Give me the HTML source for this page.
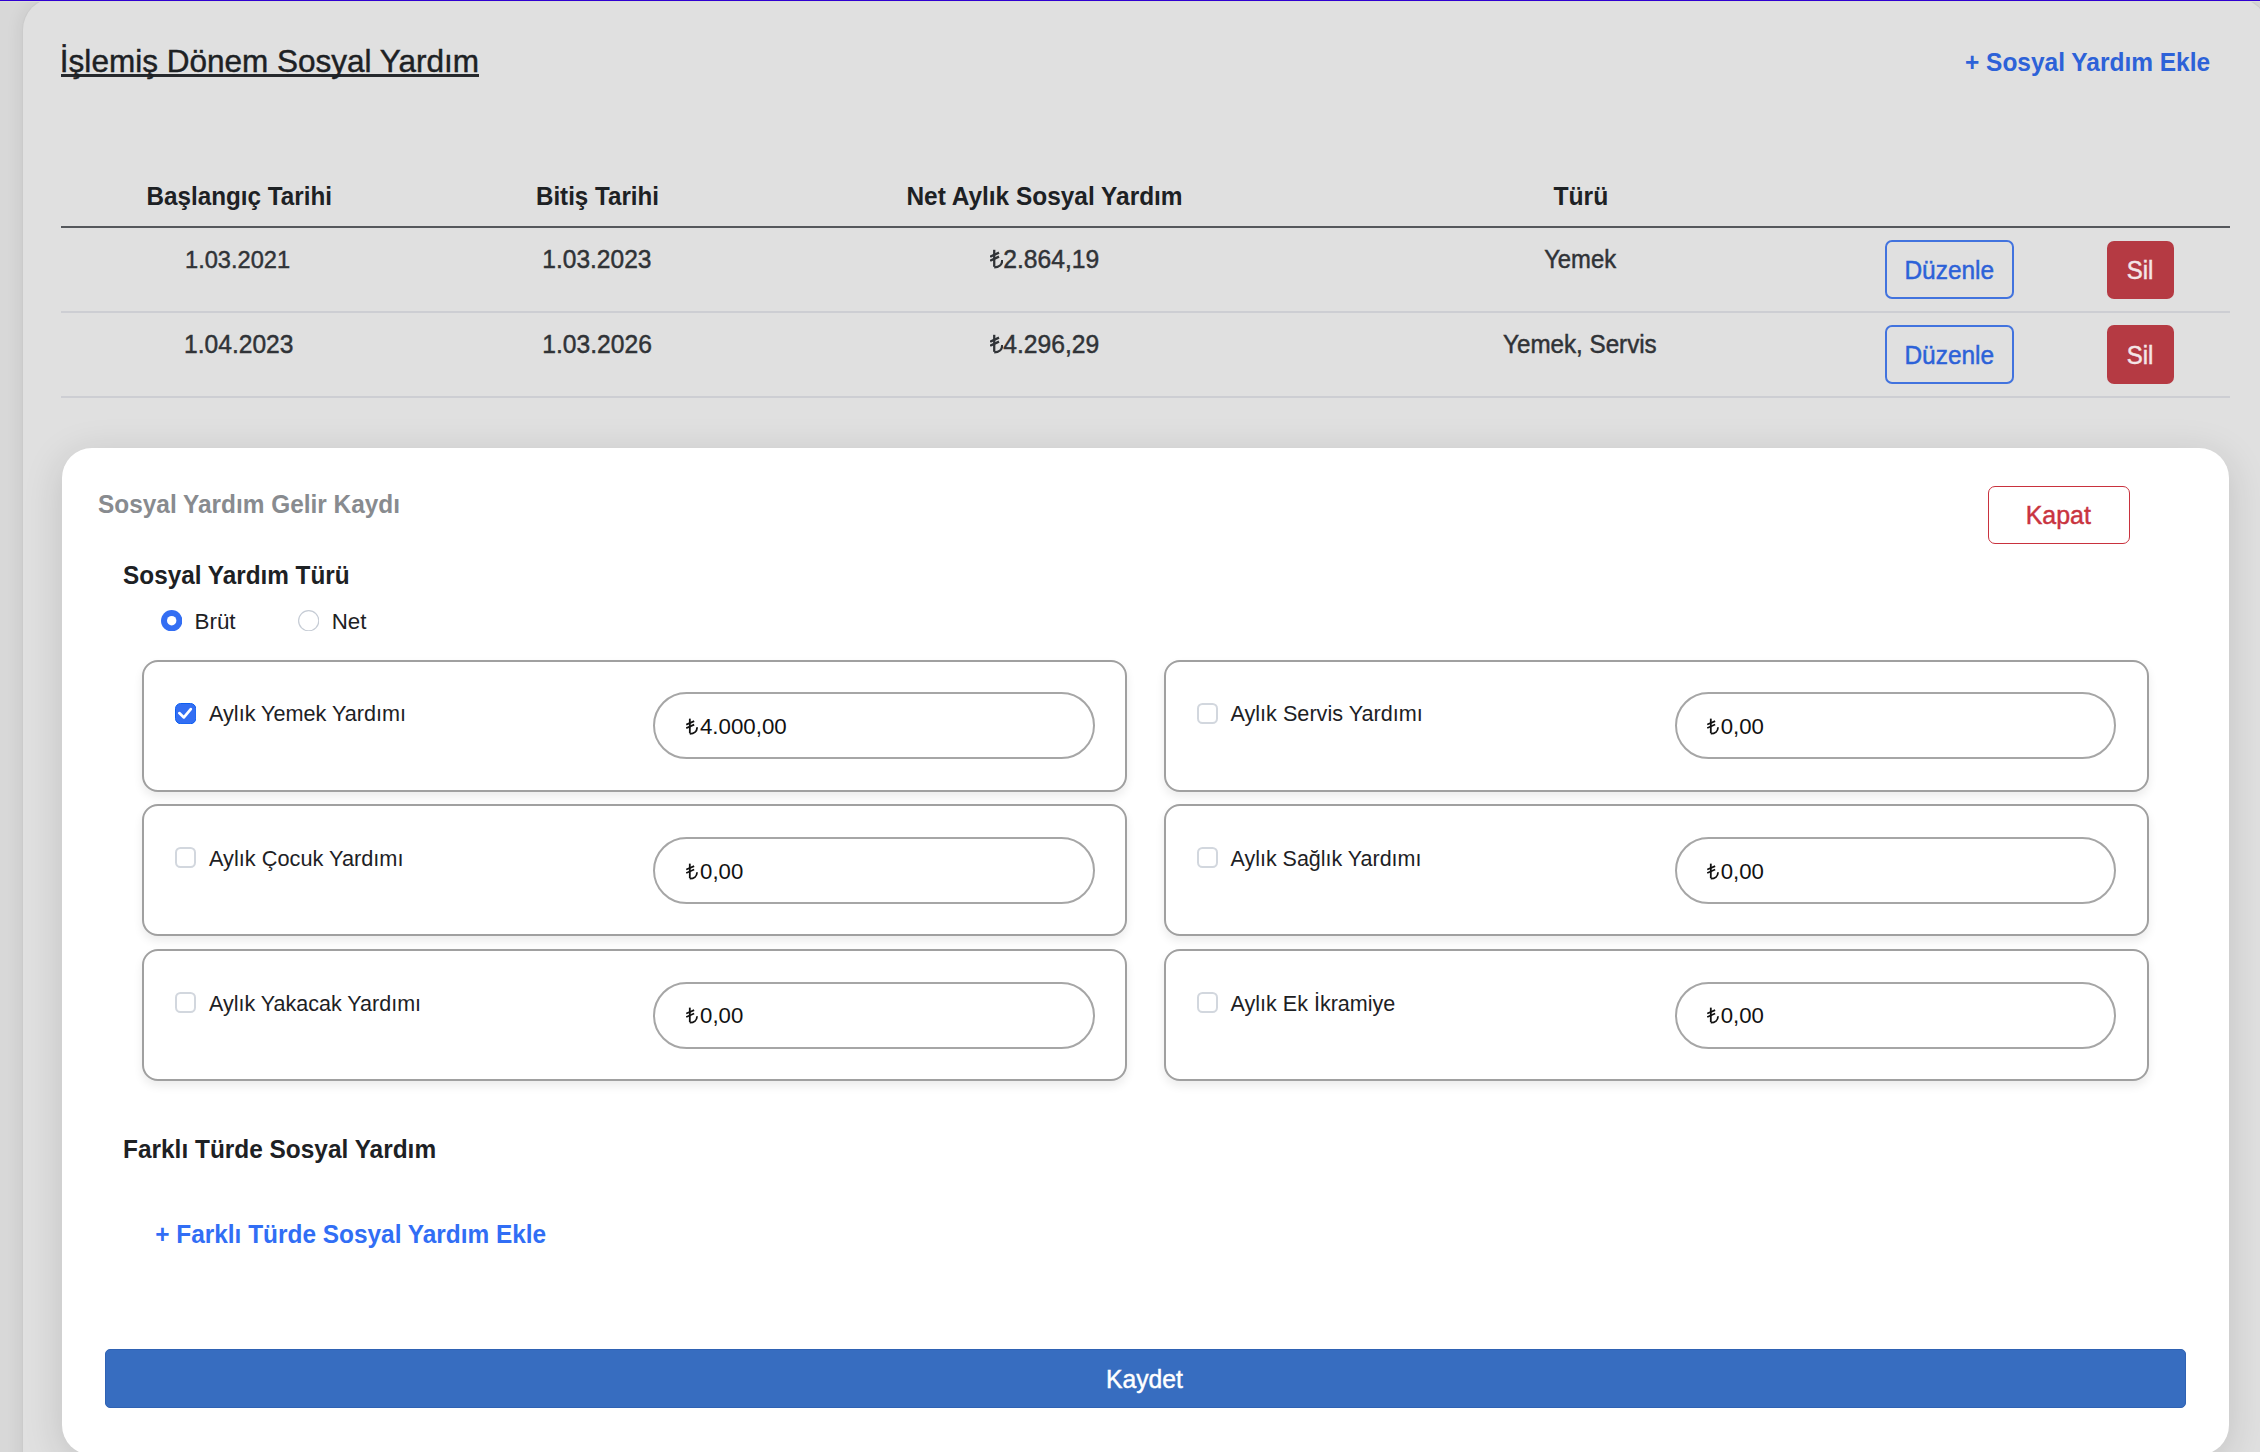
<!DOCTYPE html>
<html lang="tr">
<head>
<meta charset="utf-8">
<title>Sosyal Yardım</title>
<style>
html,body{margin:0;padding:0;}
body{width:2260px;height:1452px;overflow:hidden;position:relative;background:#d8d8d8;font-family:"Liberation Sans",sans-serif;}
.t{position:absolute;white-space:nowrap;line-height:1;}
#topline{position:absolute;left:0;top:0;width:2260px;height:1px;background:#3000d2;}
#topline2{position:absolute;left:0;top:1px;width:2260px;height:1px;background:#dcdfd6;}
#card{position:absolute;left:23px;top:-2px;width:2245px;height:1600px;background:#e0e0e0;border-radius:32px;box-shadow:0 0 0 1px #cbcbcb,-3px 0 16px rgba(0,0,0,0.07);}
.rowline{position:absolute;left:61px;width:2169px;height:2px;background:#cdced3;}
.btn-e{position:absolute;box-sizing:border-box;border:2px solid #4273de;border-radius:7px;width:129px;height:59px;}
.btn-s{position:absolute;box-sizing:border-box;background:#b53a43;border-radius:7px;width:67px;height:58.5px;}
#modal{position:absolute;left:62px;top:448px;width:2167px;height:1007px;background:#fff;border-radius:30px;box-shadow:0 8px 40px rgba(0,0,0,0.14);}
.box{position:absolute;box-sizing:border-box;border:2px solid #a0a0a0;border-radius:16px;background:#fff;width:984.6px;height:131.8px;box-shadow:0 5px 10px rgba(0,0,0,0.08);}
.inp{position:absolute;box-sizing:border-box;border:2px solid #a6a6a6;border-radius:34px;width:441.5px;height:67px;background:#fff;}
.cb{position:absolute;box-sizing:border-box;width:21px;height:21px;border:2px solid #d2d7de;border-radius:5.5px;background:#fff;}
#kapatbtn{position:absolute;box-sizing:border-box;left:1988px;top:486px;width:142px;height:58px;border:1.5px solid #c9323e;border-radius:7px;}
#kaydetbtn{position:absolute;box-sizing:border-box;left:105px;top:1349.4px;width:2080.7px;height:58.2px;background:#376dc0;border:1px solid #2f62b3;border-radius:5px;}

</style>
</head>
<body>
<div id="card"></div>
<div id="topline"></div>
<div id="topline2"></div>
<div id="uline" style="position:absolute;left:60.6px;top:74.3px;width:418.7px;height:2.3px;background:#26292d;"></div>
<div class="rowline" style="top:226.4px;background:#55585c;"></div>
<div class="rowline" style="top:311px;"></div>
<div class="rowline" style="top:396px;"></div>
<div class="btn-e" style="left:1885.3px;top:240.3px;"></div>
<div class="btn-s" style="left:2107.3px;top:240.5px;"></div>
<div class="btn-e" style="left:1885.3px;top:324.9px;"></div>
<div class="btn-s" style="left:2107.3px;top:325.1px;"></div>
<div id="modal"></div>
<div id="kapatbtn"></div>
<svg style="position:absolute;left:160.8px;top:610.1px" width="21.4" height="21.4" viewBox="0 0 21.4 21.4"><circle cx="10.7" cy="10.7" r="10.7" fill="#336ef3"/><circle cx="10.7" cy="10.7" r="4.7" fill="#fff"/></svg>
<svg style="position:absolute;left:297.8px;top:610.1px" width="21.4" height="21.4" viewBox="0 0 21.4 21.4"><circle cx="10.7" cy="10.7" r="10.1" fill="#fff" stroke="#c6ccd5" stroke-width="1.2"/></svg>
<div class="box" style="left:142.2px;top:660px;"></div>
<div class="inp" style="left:653px;top:692.3px;"></div>
<svg style="position:absolute;left:174.7px;top:702.8px" width="21.3" height="21.2" viewBox="0 0 21.3 21.2"><rect x="0.5" y="0.5" width="20.3" height="20.2" rx="5.2" fill="#336ef3" stroke="#0b5df0" stroke-width="1"/><path d="M4.3 10.1 L8.9 14.4 L15.8 6.1" fill="none" stroke="#fff" stroke-width="2.7" stroke-linecap="round" stroke-linejoin="round"/></svg>
<div class="box" style="left:1164.2px;top:660px;"></div>
<div class="inp" style="left:1674.5px;top:692.3px;"></div>
<div class="cb" style="left:1196.6px;top:702.8px;"></div>
<div class="box" style="left:142.2px;top:804.4px;"></div>
<div class="inp" style="left:653px;top:836.7px;"></div>
<div class="cb" style="left:174.7px;top:847.2px;"></div>
<div class="box" style="left:1164.2px;top:804.4px;"></div>
<div class="inp" style="left:1674.5px;top:836.7px;"></div>
<div class="cb" style="left:1196.6px;top:847.2px;"></div>
<div class="box" style="left:142.2px;top:949.3px;"></div>
<div class="inp" style="left:653px;top:981.6px;"></div>
<div class="cb" style="left:174.7px;top:992.1px;"></div>
<div class="box" style="left:1164.2px;top:949.3px;"></div>
<div class="inp" style="left:1674.5px;top:981.6px;"></div>
<div class="cb" style="left:1196.6px;top:992.1px;"></div>
<div id="kaydetbtn"></div>

<div class="t" id="title" style="left:59.86px;top:46.26px;font-size:31.526px;font-weight:normal;color:#1d2124;-webkit-text-stroke:0.45px #1d2124;">İşlemiş Dönem Sosyal Yardım</div>
<div class="t" id="addlink" style="left:1965.00px;top:51.28px;font-size:24.480px;font-weight:bold;color:#2d62d8;transform:scaleY(1.05);transform-origin:0 20.74px;">+ Sosyal Yardım Ekle</div>
<div class="t" id="h1" style="left:146.50px;top:185.39px;font-size:24.269px;font-weight:bold;color:#1d2124;transform:scaleY(1.05);transform-origin:0 20.63px;">Başlangıç Tarihi</div>
<div class="t" id="h2" style="left:535.94px;top:185.44px;font-size:24.162px;font-weight:bold;color:#1d2124;transform:scaleY(1.05);transform-origin:0 20.58px;">Bitiş Tarihi</div>
<div class="t" id="h3" style="left:906.41px;top:185.29px;font-size:24.455px;font-weight:bold;color:#1d2124;transform:scaleY(1.05);transform-origin:0 20.73px;">Net Aylık Sosyal Yardım</div>
<div class="t" id="h4" style="left:1553.46px;top:185.17px;font-size:24.699px;font-weight:bold;color:#1d2124;transform:scaleY(1.05);transform-origin:0 20.85px;">Türü</div>
<div class="t" id="r1c1" style="left:185.05px;top:249.21px;font-size:23.620px;font-weight:normal;color:#303337;-webkit-text-stroke:0.45px #303337;transform:scaleY(1.05);transform-origin:0 19.81px;">1.03.2021</div>
<div class="t" id="r1c2" style="left:542.31px;top:248.25px;font-size:24.548px;font-weight:normal;color:#303337;-webkit-text-stroke:0.45px #303337;transform:scaleY(1.05);transform-origin:0 20.77px;">1.03.2023</div>
<div class="t" id="r1c3" style="left:990.11px;top:248.19px;font-size:24.657px;font-weight:normal;color:#303337;-webkit-text-stroke:0.45px #303337;transform:scaleY(1.05);transform-origin:0 20.83px;"><svg class="lira" viewBox="0 -15.6 11.2 16.4" style="width:0.5333em;height:0.7810em;vertical-align:-0.0381em;margin-right:0.000em" ><g fill="none" stroke="#303337" stroke-width="1.95" stroke-linecap="butt"><path d="M3.6 -15 L3.6 -1.2"/><path d="M3.6 -0.75 C7.6 -0.75 10.4 -3.0 10.45 -6.8"/><path d="M0.2 -9.4 L7.7 -12.7"/><path d="M0.2 -6.1 L7.7 -9.4"/></g></svg>2.864,19</div>
<div class="t" id="r1c4" style="left:1544.18px;top:247.61px;font-size:23.823px;font-weight:normal;color:#303337;-webkit-text-stroke:0.45px #303337;transform:scaleY(1.05);transform-origin:0 20.41px;">Yemek</div>
<div class="t" id="r2c1" style="left:184.07px;top:333.22px;font-size:24.593px;font-weight:normal;color:#303337;-webkit-text-stroke:0.45px #303337;transform:scaleY(1.05);transform-origin:0 20.80px;">1.04.2023</div>
<div class="t" id="r2c2" style="left:542.31px;top:333.20px;font-size:24.638px;font-weight:normal;color:#303337;-webkit-text-stroke:0.45px #303337;transform:scaleY(1.05);transform-origin:0 20.82px;">1.03.2026</div>
<div class="t" id="r2c3" style="left:990.11px;top:333.19px;font-size:24.657px;font-weight:normal;color:#303337;-webkit-text-stroke:0.45px #303337;transform:scaleY(1.05);transform-origin:0 20.83px;"><svg class="lira" viewBox="0 -15.6 11.2 16.4" style="width:0.5333em;height:0.7810em;vertical-align:-0.0381em;margin-right:0.000em" ><g fill="none" stroke="#303337" stroke-width="1.95" stroke-linecap="butt"><path d="M3.6 -15 L3.6 -1.2"/><path d="M3.6 -0.75 C7.6 -0.75 10.4 -3.0 10.45 -6.8"/><path d="M0.2 -9.4 L7.7 -12.7"/><path d="M0.2 -6.1 L7.7 -9.4"/></g></svg>4.296,29</div>
<div class="t" id="r2c4" style="left:1503.02px;top:333.42px;font-size:24.209px;font-weight:normal;color:#303337;-webkit-text-stroke:0.45px #303337;transform:scaleY(1.05);transform-origin:0 20.60px;">Yemek, Servis</div>
<div class="t" id="ed1" style="left:1904.43px;top:259.29px;font-size:24.458px;font-weight:normal;color:#2d62d8;-webkit-text-stroke:0.45px #2d62d8;transform:scaleY(1.05);transform-origin:0 20.73px;">Düzenle</div>
<div class="t" id="ed2" style="left:1904.43px;top:344.29px;font-size:24.458px;font-weight:normal;color:#2d62d8;-webkit-text-stroke:0.45px #2d62d8;transform:scaleY(1.05);transform-origin:0 20.73px;">Düzenle</div>
<div class="t" id="sil1" style="left:2126.72px;top:258.53px;font-size:23.970px;font-weight:normal;color:#f4e6e7;-webkit-text-stroke:0.45px #f4e6e7;transform:scaleY(1.05);transform-origin:0 20.49px;">Sil</div>
<div class="t" id="sil2" style="left:2126.72px;top:343.53px;font-size:23.970px;font-weight:normal;color:#f4e6e7;-webkit-text-stroke:0.45px #f4e6e7;transform:scaleY(1.05);transform-origin:0 20.49px;">Sil</div>
<div class="t" id="mtitle" style="left:98.00px;top:493.31px;font-size:24.419px;font-weight:bold;color:#888b8f;transform:scaleY(1.05);transform-origin:0 20.71px;">Sosyal Yardım Gelir Kaydı</div>
<div class="t" id="kapat" style="left:2025.66px;top:502.54px;font-size:24.957px;font-weight:normal;color:#c9343f;-webkit-text-stroke:0.45px #c9343f;transform:scaleY(1.05);transform-origin:0 21.48px;">Kapat</div>
<div class="t" id="sec1" style="left:123.09px;top:564.36px;font-size:24.329px;font-weight:bold;color:#1d2124;transform:scaleY(1.05);transform-origin:0 20.66px;">Sosyal Yardım Türü</div>
<div class="t" id="brut" style="left:194.51px;top:611.31px;font-size:22.413px;font-weight:normal;color:#1d2124;">Brüt</div>
<div class="t" id="net" style="left:331.64px;top:611.36px;font-size:22.317px;font-weight:normal;color:#1d2124;">Net</div>
<div class="t" id="lab0" style="left:209.00px;top:702.70px;font-size:21.642px;font-weight:normal;color:#1d2124;">Aylık Yemek Yardımı</div>
<div class="t" id="val0" style="left:686.00px;top:716.36px;font-size:22.329px;font-weight:normal;color:#111;"><svg class="lira" viewBox="0 -15.6 11.2 16.4" style="width:0.5333em;height:0.7810em;vertical-align:-0.0381em;margin-right:0.090em" ><g fill="none" stroke="#111" stroke-width="1.7" stroke-linecap="butt"><path d="M3.6 -15 L3.6 -1.2"/><path d="M3.6 -0.75 C7.6 -0.75 10.4 -3.0 10.45 -6.8"/><path d="M0.2 -9.4 L7.7 -12.7"/><path d="M0.2 -6.1 L7.7 -9.4"/></g></svg>4.000,00</div>
<div class="t" id="lab1" style="left:1230.46px;top:702.70px;font-size:21.637px;font-weight:normal;color:#1d2124;">Aylık Servis Yardımı</div>
<div class="t" id="val1" style="left:1706.95px;top:716.43px;font-size:22.180px;font-weight:normal;color:#111;"><svg class="lira" viewBox="0 -15.6 11.2 16.4" style="width:0.5333em;height:0.7810em;vertical-align:-0.0381em;margin-right:0.090em" ><g fill="none" stroke="#111" stroke-width="1.7" stroke-linecap="butt"><path d="M3.6 -15 L3.6 -1.2"/><path d="M3.6 -0.75 C7.6 -0.75 10.4 -3.0 10.45 -6.8"/><path d="M0.2 -9.4 L7.7 -12.7"/><path d="M0.2 -6.1 L7.7 -9.4"/></g></svg>0,00</div>
<div class="t" id="lab2" style="left:209.00px;top:847.65px;font-size:21.746px;font-weight:normal;color:#1d2124;">Aylık Çocuk Yardımı</div>
<div class="t" id="val2" style="left:686.26px;top:861.43px;font-size:22.188px;font-weight:normal;color:#111;"><svg class="lira" viewBox="0 -15.6 11.2 16.4" style="width:0.5333em;height:0.7810em;vertical-align:-0.0381em;margin-right:0.090em" ><g fill="none" stroke="#111" stroke-width="1.7" stroke-linecap="butt"><path d="M3.6 -15 L3.6 -1.2"/><path d="M3.6 -0.75 C7.6 -0.75 10.4 -3.0 10.45 -6.8"/><path d="M0.2 -9.4 L7.7 -12.7"/><path d="M0.2 -6.1 L7.7 -9.4"/></g></svg>0,00</div>
<div class="t" id="lab3" style="left:1230.52px;top:849.28px;font-size:21.477px;font-weight:normal;color:#1d2124;">Aylık Sağlık Yardımı</div>
<div class="t" id="val3" style="left:1706.95px;top:861.43px;font-size:22.180px;font-weight:normal;color:#111;"><svg class="lira" viewBox="0 -15.6 11.2 16.4" style="width:0.5333em;height:0.7810em;vertical-align:-0.0381em;margin-right:0.090em" ><g fill="none" stroke="#111" stroke-width="1.7" stroke-linecap="butt"><path d="M3.6 -15 L3.6 -1.2"/><path d="M3.6 -0.75 C7.6 -0.75 10.4 -3.0 10.45 -6.8"/><path d="M0.2 -9.4 L7.7 -12.7"/><path d="M0.2 -6.1 L7.7 -9.4"/></g></svg>0,00</div>
<div class="t" id="lab4" style="left:209.00px;top:994.25px;font-size:21.533px;font-weight:normal;color:#1d2124;">Aylık Yakacak Yardımı</div>
<div class="t" id="val4" style="left:686.26px;top:1005.43px;font-size:22.188px;font-weight:normal;color:#111;"><svg class="lira" viewBox="0 -15.6 11.2 16.4" style="width:0.5333em;height:0.7810em;vertical-align:-0.0381em;margin-right:0.090em" ><g fill="none" stroke="#111" stroke-width="1.7" stroke-linecap="butt"><path d="M3.6 -15 L3.6 -1.2"/><path d="M3.6 -0.75 C7.6 -0.75 10.4 -3.0 10.45 -6.8"/><path d="M0.2 -9.4 L7.7 -12.7"/><path d="M0.2 -6.1 L7.7 -9.4"/></g></svg>0,00</div>
<div class="t" id="lab5" style="left:1230.47px;top:992.74px;font-size:21.554px;font-weight:normal;color:#1d2124;">Aylık Ek İkramiye</div>
<div class="t" id="val5" style="left:1706.95px;top:1005.43px;font-size:22.180px;font-weight:normal;color:#111;"><svg class="lira" viewBox="0 -15.6 11.2 16.4" style="width:0.5333em;height:0.7810em;vertical-align:-0.0381em;margin-right:0.090em" ><g fill="none" stroke="#111" stroke-width="1.7" stroke-linecap="butt"><path d="M3.6 -15 L3.6 -1.2"/><path d="M3.6 -0.75 C7.6 -0.75 10.4 -3.0 10.45 -6.8"/><path d="M0.2 -9.4 L7.7 -12.7"/><path d="M0.2 -6.1 L7.7 -9.4"/></g></svg>0,00</div>
<div class="t" id="farkli" style="left:123.02px;top:1138.30px;font-size:24.438px;font-weight:bold;color:#1d2124;transform:scaleY(1.05);transform-origin:0 20.72px;">Farklı Türde Sosyal Yardım</div>
<div class="t" id="addfark" style="left:155.25px;top:1223.31px;font-size:24.425px;font-weight:bold;color:#316ef5;transform:scaleY(1.05);transform-origin:0 20.71px;">+ Farklı Türde Sosyal Yardım Ekle</div>
<div class="t" id="kaydet" style="left:1106.06px;top:1368.17px;font-size:24.692px;font-weight:normal;color:#ffffff;-webkit-text-stroke:0.45px #ffffff;transform:scaleY(1.05);transform-origin:0 20.85px;">Kaydet</div>
</body>
</html>
